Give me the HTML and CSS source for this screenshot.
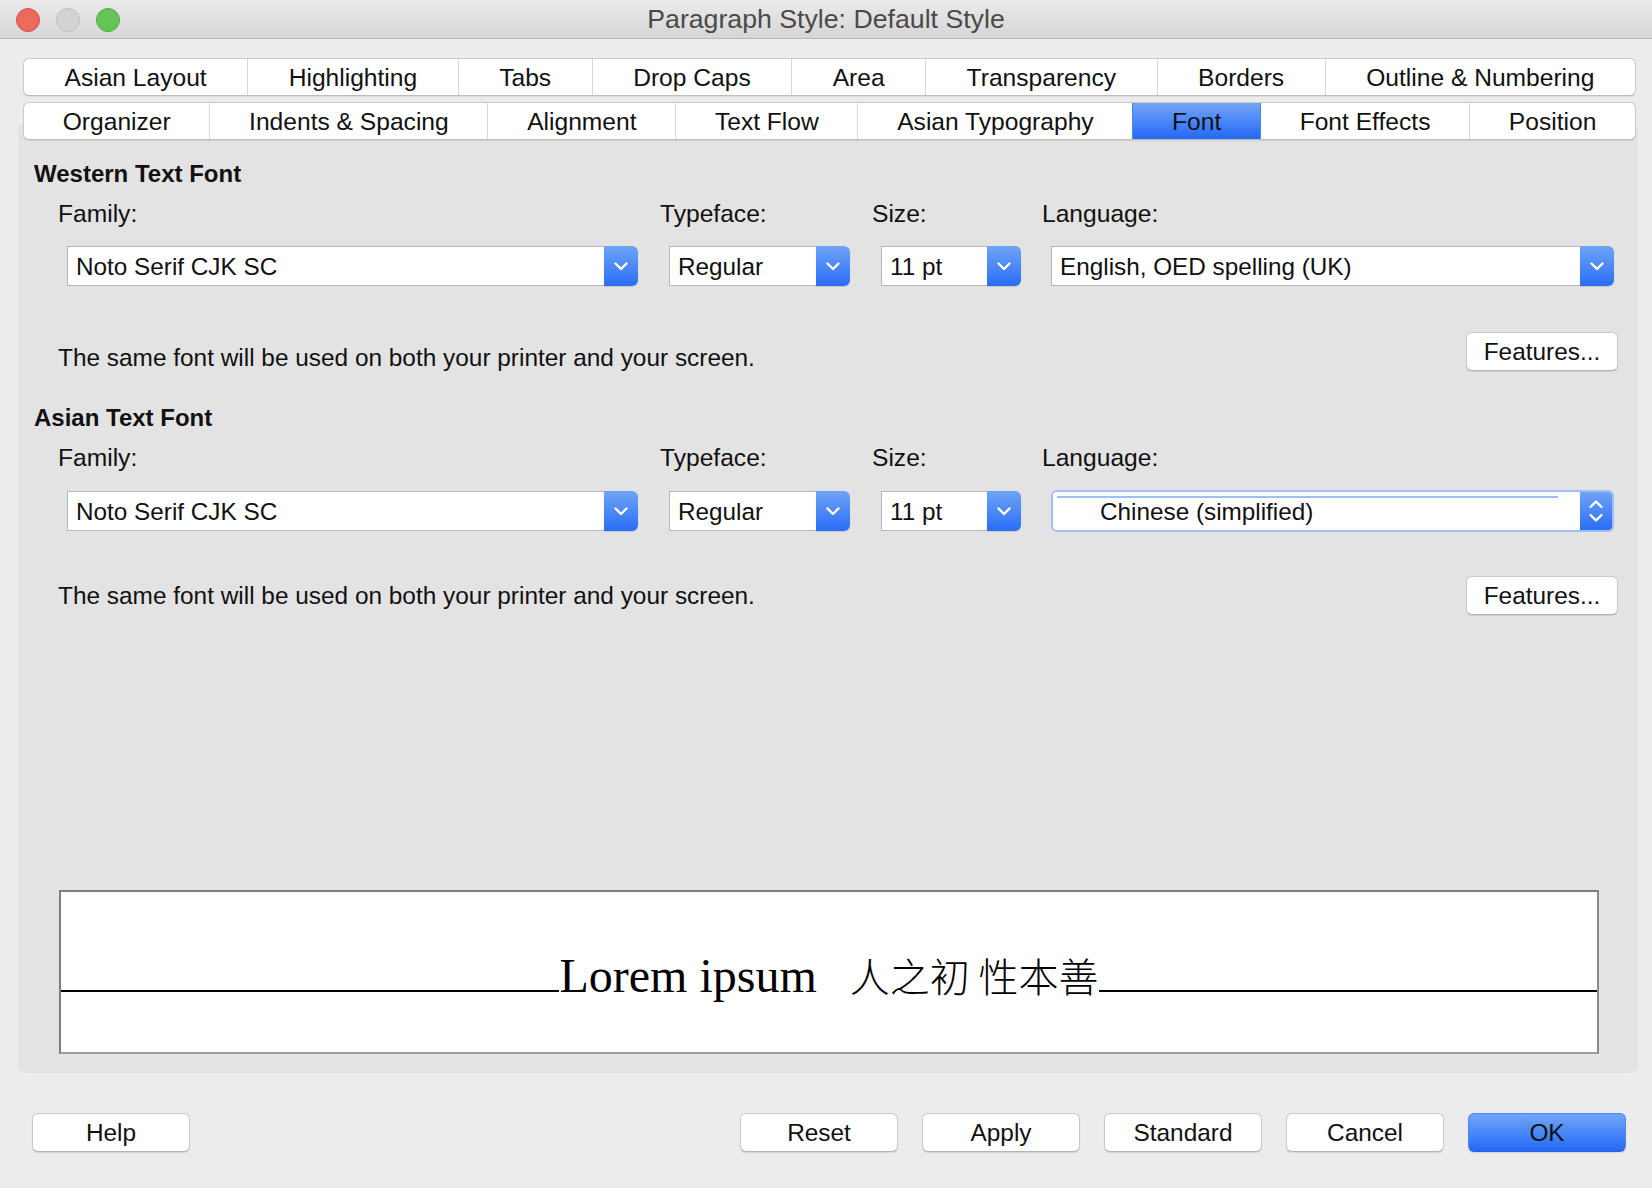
FILE: index.html
```html
<!DOCTYPE html>
<html>
<head>
<meta charset="utf-8">
<title>Paragraph Style: Default Style</title>
<link rel="stylesheet" href="styles.css">
</head>
<body>
<div class="window">
  <header class="titlebar">
    <div class="lights">
      <span class="light red"></span>
      <span class="light grey"></span>
      <span class="light green"></span>
    </div>
    <div class="title">Paragraph Style: Default Style</div>
    <div></div>
  </header>

  <main class="content">
    <nav class="tabs">
      <div class="tabrow">
        <div class="tab">Asian Layout</div>
        <div class="tab">Highlighting</div>
        <div class="tab">Tabs</div>
        <div class="tab">Drop Caps</div>
        <div class="tab">Area</div>
        <div class="tab">Transparency</div>
        <div class="tab">Borders</div>
        <div class="tab">Outline &amp; Numbering</div>
      </div>
      <div class="tabrow">
        <div class="tab">Organizer</div>
        <div class="tab">Indents &amp; Spacing</div>
        <div class="tab">Alignment</div>
        <div class="tab">Text Flow</div>
        <div class="tab">Asian Typography</div>
        <div class="tab active">Font</div>
        <div class="tab">Font Effects</div>
        <div class="tab">Position</div>
      </div>
    </nav>

    <section class="panel">
      <h2 class="group-title">Western Text Font</h2>
      <div class="font-grid western">
        <div class="label">Family:</div>
        <div class="label">Typeface:</div>
        <div class="label">Size:</div>
        <div class="label">Language:</div>
        <div class="combo w-family"><div class="field">Noto Serif CJK SC</div><div class="arrow"><svg width="14" height="9" viewBox="0 0 14 9"><polyline points="1.5,1.5 7,7 12.5,1.5" fill="none" stroke="#fff" stroke-width="2.4" stroke-linecap="round" stroke-linejoin="round"/></svg></div></div>
        <div class="combo w-type"><div class="field">Regular</div><div class="arrow"><svg width="14" height="9" viewBox="0 0 14 9"><polyline points="1.5,1.5 7,7 12.5,1.5" fill="none" stroke="#fff" stroke-width="2.4" stroke-linecap="round" stroke-linejoin="round"/></svg></div></div>
        <div class="combo w-size"><div class="field">11 pt</div><div class="arrow"><svg width="14" height="9" viewBox="0 0 14 9"><polyline points="1.5,1.5 7,7 12.5,1.5" fill="none" stroke="#fff" stroke-width="2.4" stroke-linecap="round" stroke-linejoin="round"/></svg></div></div>
        <div class="combo w-lang"><div class="field">English, OED spelling (UK)</div><div class="arrow"><svg width="14" height="9" viewBox="0 0 14 9"><polyline points="1.5,1.5 7,7 12.5,1.5" fill="none" stroke="#fff" stroke-width="2.4" stroke-linecap="round" stroke-linejoin="round"/></svg></div></div>
      </div>
      <div class="info-row first">
        <p class="info">The same font will be used on both your printer and your screen.</p>
        <button class="btn features">Features...</button>
      </div>

      <h2 class="group-title second">Asian Text Font</h2>
      <div class="font-grid asian">
        <div class="label">Family:</div>
        <div class="label">Typeface:</div>
        <div class="label">Size:</div>
        <div class="label">Language:</div>
        <div class="combo w-family"><div class="field">Noto Serif CJK SC</div><div class="arrow"><svg width="14" height="9" viewBox="0 0 14 9"><polyline points="1.5,1.5 7,7 12.5,1.5" fill="none" stroke="#fff" stroke-width="2.4" stroke-linecap="round" stroke-linejoin="round"/></svg></div></div>
        <div class="combo w-type"><div class="field">Regular</div><div class="arrow"><svg width="14" height="9" viewBox="0 0 14 9"><polyline points="1.5,1.5 7,7 12.5,1.5" fill="none" stroke="#fff" stroke-width="2.4" stroke-linecap="round" stroke-linejoin="round"/></svg></div></div>
        <div class="combo w-size"><div class="field">11 pt</div><div class="arrow"><svg width="14" height="9" viewBox="0 0 14 9"><polyline points="1.5,1.5 7,7 12.5,1.5" fill="none" stroke="#fff" stroke-width="2.4" stroke-linecap="round" stroke-linejoin="round"/></svg></div></div>
        <div class="combo w-lang focused"><div class="field">Chinese (simplified)</div><div class="arrow updown"><svg width="16" height="26" viewBox="0 0 16 26"><polyline points="2.5,9 8,3.5 13.5,9" fill="none" stroke="#fff" stroke-width="2.3" stroke-linecap="round" stroke-linejoin="round"/><polyline points="2.5,17 8,22.5 13.5,17" fill="none" stroke="#fff" stroke-width="2.3" stroke-linecap="round" stroke-linejoin="round"/></svg></div></div>
      </div>
      <div class="info-row second">
        <p class="info">The same font will be used on both your printer and your screen.</p>
        <button class="btn features">Features...</button>
      </div>

      <div class="preview">
        <span class="rule"></span>
        <span class="sample"><span class="latin">Lorem ipsum</span><span class="cjk">人之初 性本善</span></span>
        <span class="rule"></span>
      </div>
    </section>

    <div class="buttons">
      <button class="btn">Help</button>
      <div class="btn-group">
        <button class="btn">Reset</button>
        <button class="btn">Apply</button>
        <button class="btn">Standard</button>
        <button class="btn">Cancel</button>
        <button class="btn primary">OK</button>
      </div>
    </div>
  </main>
</div>
</body>
</html>
```

FILE: styles.css
```css
html, body {
  margin: 0;
  padding: 0;
}

body {
  background: #ececec;
  font-family: "Liberation Sans", Arial, sans-serif;
  color: #111;
}

.window {
  width: 1652px;
  height: 1188px;
  background: #ececec;
  box-sizing: border-box;
  overflow: hidden;
}

/* ---------- title bar ---------- */
.titlebar {
  height: 38px;
  border-bottom: 1px solid #b9b9b9;
  background: linear-gradient(#ebebeb, #d5d5d5);
  display: grid;
  grid-template-columns: 1fr auto 1fr;
  align-items: center;
}

.lights {
  display: flex;
  gap: 16px;
  padding-left: 16px;
  padding-top: 1px;
}

.light {
  width: 24px;
  height: 24px;
  border-radius: 50%;
  box-sizing: border-box;
}

.light.red { background: #ee6a5f; border: 1px solid #d85249; }
.light.grey { background: #d3d3d3; border: 1px solid #bdbdbd; }
.light.green { background: #62c554; border: 1px solid #50ac42; }

.title {
  font-size: 26.7px;
  color: #4a4a4a;
  line-height: 38px;
}

/* ---------- tabs ---------- */
.content {
  display: flex;
  flex-direction: column;
}

.tabs {
  position: relative;
  z-index: 1;
  margin: 19px 16px 0 23px;
  display: flex;
  flex-direction: column;
  gap: 6px;
}

.tabrow {
  display: flex;
  height: 38px;
  box-sizing: border-box;
  border: 1px solid #cacaca;
  border-bottom-color: #bdbdbd;
  border-radius: 6px;
  background: #fff;
  overflow: hidden;
  box-shadow: 0 1px 1px rgba(0, 0, 0, 0.08);
}

.tab {
  flex: 1 1 auto;
  text-align: center;
  font-size: 24.6px;
  line-height: 37px;
  white-space: nowrap;
  border-left: 1px solid #d7d7d7;
  color: #111;
}

.tab:first-child {
  border-left: 0;
}

.tab.active {
  background: linear-gradient(#72a6f8, #2468f6);
  border-left-color: #4a86f0;
}

.tab.active + .tab {
  border-left-color: #4a86f0;
}

/* ---------- panel ---------- */
.panel {
  margin: -18px 14px 0 18px;
  background: #e3e3e3;
  border-radius: 8px;
  padding: 38px 20px 19px 16px;
  display: flex;
  flex-direction: column;
}

.group-title {
  margin: 0;
  font-size: 24px;
  font-weight: bold;
  line-height: 28px;
  color: #111;
}

.group-title.second {
  margin-top: 32px;
}

.font-grid {
  margin-left: 24px;
  margin-top: 12px;
  display: grid;
  grid-template-columns: 602px 212px 170px 572px;
  row-gap: 18px;
}

.font-grid.asian {
  row-gap: 19px;
}

.label {
  font-size: 24.6px;
  line-height: 28px;
}

.combo {
  margin-left: 9px;
  height: 40px;
  display: flex;
  box-sizing: border-box;
}

.w-family { width: 571px; }
.w-type { width: 181px; }
.w-size { width: 140px; }
.w-lang { width: 563px; }

.combo .field {
  flex: 1;
  background: #fff;
  border: 1px solid #b7b7b7;
  border-right: 0;
  font-size: 24.3px;
  line-height: 40px;
  padding-left: 8px;
  white-space: nowrap;
  overflow: hidden;
}

.combo .arrow {
  width: 34px;
  background: linear-gradient(#6fa4f8, #2a6df6);
  border-radius: 0 6px 6px 0;
  display: flex;
  align-items: center;
  justify-content: center;
  box-shadow: 0 1px 1px rgba(0, 0, 0, 0.12);
}

.combo.focused {
  height: 42px;
  border: 2px solid #9fc0f3;
  border-radius: 6px;
  margin-top: -1px;
}

.combo.focused .field {
  border: 0;
  border-radius: 4px 0 0 4px;
  line-height: 40px;
  padding-left: 47px;
  background:
    linear-gradient(#9ebff2, #9ebff2) no-repeat 4px 4px / calc(100% - 26px) 2px,
    #fff;
}

.combo.focused .arrow {
  width: 32px;
  border-radius: 0 4px 4px 0;
  box-shadow: none;
}

.info-row {
  display: flex;
  align-items: flex-start;
  justify-content: space-between;
  margin-left: 24px;
}

.info-row.first {
  margin-top: 46px;
}

.info-row.second {
  margin-top: 44px;
}

.info {
  margin: 0;
  font-size: 24.4px;
  line-height: 28px;
}

.info-row.first .info {
  margin-top: 12px;
}

.info-row.second .info {
  margin-top: 6px;
}

.btn {
  width: 158px;
  height: 39px;
  box-sizing: border-box;
  background: #fff;
  border: 1px solid #c9c9c9;
  border-bottom-color: #b3b3b3;
  border-radius: 6px;
  font-family: "Liberation Sans", Arial, sans-serif;
  font-size: 24.4px;
  color: #111;
  padding: 0;
  box-shadow: 0 1px 1px rgba(0, 0, 0, 0.1);
}

.btn.features {
  width: 152px;
}

.btn.primary {
  background: linear-gradient(#71a6f8, #2469f6);
  border-color: #4f87ee;
  border-bottom-color: #2a63d8;
}

/* ---------- preview ---------- */
.preview {
  margin: 275px 19px 0 25px;
  background: #fff;
  border: 2px solid #7d7d7d;
  border-bottom-color: #9c9c9c;
  border-right-color: #8a8a8a;
  display: flex;
  align-items: baseline;
  padding-top: 55px;
  box-sizing: content-box;
  height: 105px;
}

.rule {
  flex: 1;
  height: 0;
  border-bottom: 2px solid #000;
}

.sample {
  display: flex;
  align-items: baseline;
  white-space: nowrap;
  color: #000;
}

.latin {
  font-family: "Liberation Serif", "Times New Roman", serif;
  font-size: 48px;
  line-height: 56px;
}

.cjk {
  font-family: "Noto Sans CJK SC", sans-serif;
  font-weight: 300;
  font-size: 40px;
  line-height: 56px;
  margin-left: 33px;
}

/* ---------- bottom buttons ---------- */
.buttons {
  margin-top: 40px;
  padding: 0 26px 0 32px;
  display: flex;
  justify-content: space-between;
}

.btn-group {
  display: flex;
  gap: 24px;
}
```
